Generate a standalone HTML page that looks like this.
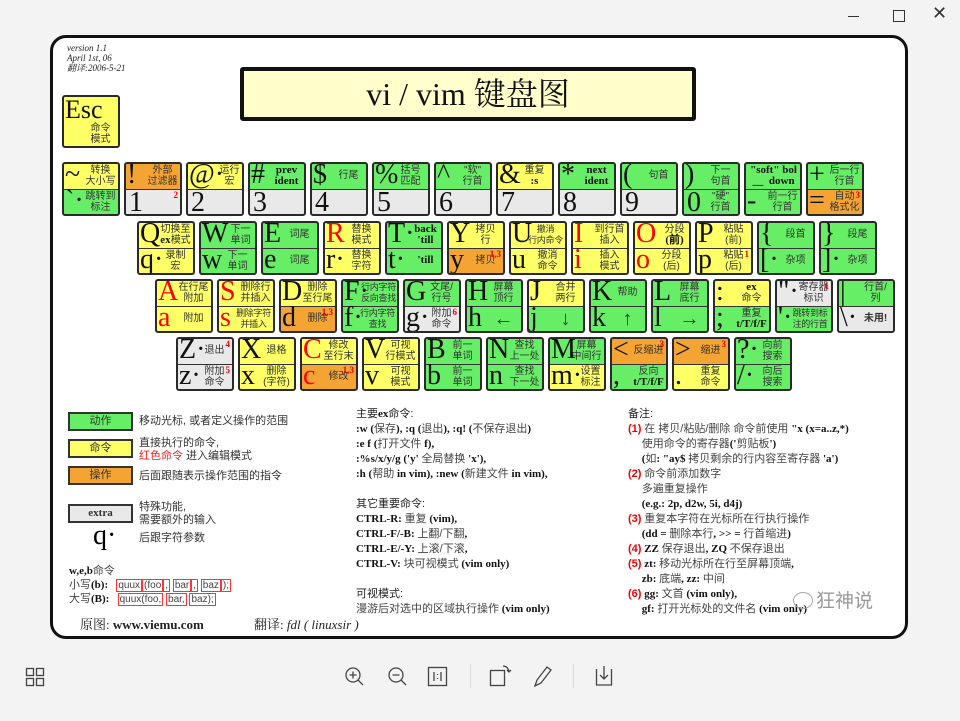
<!DOCTYPE html>
<html><head><meta charset="utf-8"><style>
*{margin:0;padding:0}
body{width:960px;height:721px;background:#f3f3f3;position:relative;overflow:hidden;font-family:"Liberation Serif","Noto Serif CJK SC",serif}
.card{position:absolute;left:50px;top:35px;width:858px;height:604px;background:#fff;border:3px solid #111;border-radius:16px;box-sizing:border-box}
.a{position:absolute}
.k{position:absolute;width:58px;height:54px;border:2px solid #2a2a2a;border-radius:3px;box-sizing:border-box;overflow:hidden;background:#333}
.t,.b{position:absolute;left:0;right:0}
.t{top:0;height:25px}
.b{top:26px;bottom:0}
.G{background:#66ee66}.Y{background:#ffff66}.O{background:#f4a432}.E{background:#e9e9e9}
.L{position:absolute;left:1px;top:-5px;font:28px/32px "Liberation Serif",serif;color:#111}
.r{color:#f00}
.s{position:absolute;left:20px;right:1px;top:1px;text-align:center;font:10px/11px "Liberation Sans","Noto Sans CJK SC",sans-serif;color:#333;white-space:nowrap}
.s9{font-size:9px;letter-spacing:-0.3px}
.s1{top:6px}
.w{font:bold 11px/11px "Liberation Serif",serif;color:#111}
.sup{position:absolute;right:2px;top:0;color:#e00;font:bold 9px/10px "Liberation Serif",serif}
.d{position:absolute;left:3px;top:-3px;font:28px/32px "Liberation Serif",serif;color:#111}
.lg{position:absolute;left:68px;width:65px;height:19px;border:2px solid #333;box-sizing:border-box;text-align:center;font:11px/15px "Liberation Sans","Noto Sans CJK SC",sans-serif;color:#333}
.tx{position:absolute;font:11px/13px "Liberation Sans","Noto Sans CJK SC",sans-serif;color:#333}
.col{position:absolute;font:bold 11px/15px "Liberation Serif","Noto Serif CJK SC",serif;color:#111}
.col span{font-weight:normal;color:#444;font-family:"Liberation Sans","Noto Sans CJK SC",sans-serif}
.col .rd{color:#e00;font-weight:bold}
.mono{font:bold 10px/12px "Liberation Mono",monospace;border:1px solid #f33;padding:0 1px}
</style></head><body>
<div class="a" style="left:848px;top:16px;width:11px;height:1px;background:#333"></div>
<div class="a" style="left:893px;top:10px;width:10px;height:10px;border:1px solid #333"></div>
<div class="a" style="left:932px;top:4px;font:18px/20px 'DejaVu Sans',sans-serif;color:#333">✕</div>

<div class="card"></div>
<div class="a" style="left:67px;top:43px;font:italic 9px/10px 'Liberation Serif','Noto Serif CJK SC',serif;color:#222">version 1.1<br>April 1st, 06<br>翻译:2006-5-21</div>
<div class="a" style="left:240px;top:67px;width:456px;height:54px;border:4px solid #111;border-radius:3px;background:#ffffcc;box-sizing:border-box;text-align:center;font:32px/46px 'Liberation Serif','Noto Serif CJK SC',serif;color:#111">vi / vim 键盘图</div>
<div class="k Y" style="left:62px;top:95px;height:53px;background:#ffff66"><div class="L" style="font-size:26px;top:-3px">Esc</div><div class="s" style="left:20px;top:26px">命令<br>模式</div></div>

<div class="k" style="left:62px;top:162px"><div class="t Y"><div class="L">~</div><div class="s">转换<br>大小写</div></div><div class="b G"><div class="L">`·</div><div class="s">跳转到<br>标注</div></div></div>
<div class="k" style="left:124px;top:162px"><div class="t O"><div class="L">!</div><div class="s">外部<br>过滤器</div></div><div class="b E"><div class="d">1</div><div class="sup">2</div></div></div>
<div class="k" style="left:186px;top:162px"><div class="t Y"><div class="L">@·</div><div class="s" style="left:30px">运行<br>宏</div></div><div class="b E"><div class="d">2</div></div></div>
<div class="k" style="left:248px;top:162px"><div class="t G"><div class="L">#</div><div class="s w">prev<br>ident</div></div><div class="b E"><div class="d">3</div></div></div>
<div class="k" style="left:310px;top:162px"><div class="t G"><div class="L">$</div><div class="s s1">行尾</div></div><div class="b E"><div class="d">4</div></div></div>
<div class="k" style="left:372px;top:162px"><div class="t G"><div class="L">%</div><div class="s">括号<br>匹配</div></div><div class="b E"><div class="d">5</div></div></div>
<div class="k" style="left:434px;top:162px"><div class="t G"><div class="L">^</div><div class="s">"软"<br>行首</div></div><div class="b E"><div class="d">6</div></div></div>
<div class="k" style="left:496px;top:162px"><div class="t Y"><div class="L">&amp;</div><div class="s">重复<br><b class="w">:s</b></div></div><div class="b E"><div class="d">7</div></div></div>
<div class="k" style="left:558px;top:162px"><div class="t G"><div class="L">*</div><div class="s w">next<br>ident</div></div><div class="b E"><div class="d">8</div></div></div>
<div class="k" style="left:620px;top:162px"><div class="t G"><div class="L">(</div><div class="s s1">句首</div></div><div class="b E"><div class="d">9</div></div></div>
<div class="k" style="left:682px;top:162px"><div class="t G"><div class="L">)</div><div class="s">下一<br>句首</div></div><div class="b G"><div class="d">0</div><div class="s">"硬"<br>行首</div></div></div>
<div class="k" style="left:744px;top:162px"><div class="t G"><div class="s w" style="left:2px">"soft" bol<br>__&nbsp; down</div></div><div class="b G"><div class="L">-</div><div class="s">前一行<br>行首</div></div></div>
<div class="k" style="left:806px;top:162px"><div class="t G"><div class="L">+</div><div class="s">后一行<br>行首</div></div><div class="b O"><div class="L">=</div><div class="s">自动<br>格式化</div><div class="sup">3</div></div></div>

<div class="k" style="left:137px;top:221px"><div class="t Y"><div class="L">Q</div><div class="s">切换至<br><b class="w">ex</b>模式</div></div><div class="b Y"><div class="L">q·</div><div class="s">录制<br>宏</div></div></div>
<div class="k" style="left:199px;top:221px"><div class="t G"><div class="L">W</div><div class="s" style="left:26px">下一<br>单词</div></div><div class="b G"><div class="L">w</div><div class="s">下一<br>单词</div></div></div>
<div class="k" style="left:261px;top:221px"><div class="t G"><div class="L">E</div><div class="s s1">词尾</div></div><div class="b G"><div class="L">e</div><div class="s s1">词尾</div></div></div>
<div class="k" style="left:323px;top:221px"><div class="t Y"><div class="L r">R</div><div class="s">替换<br>模式</div></div><div class="b Y"><div class="L">r·</div><div class="s">替换<br>字符</div></div></div>
<div class="k" style="left:385px;top:221px"><div class="t G"><div class="L">T·</div><div class="s w" style="left:24px">back<br>'till</div></div><div class="b G"><div class="L">t·</div><div class="s w s1" style="left:24px">'till</div></div></div>
<div class="k" style="left:447px;top:221px"><div class="t Y"><div class="L">Y</div><div class="s">拷贝<br>行</div></div><div class="b O"><div class="L">y</div><div class="s s1">拷贝</div><div class="sup">1,3</div></div></div>
<div class="k" style="left:509px;top:221px"><div class="t Y"><div class="L">U</div><div class="s s9" style="left:16px">撤消<br>行内命令</div></div><div class="b Y"><div class="L">u</div><div class="s">撤消<br>命令</div></div></div>
<div class="k" style="left:571px;top:221px"><div class="t Y"><div class="L r">I</div><div class="s">到行首<br>插入</div></div><div class="b Y"><div class="L r">i</div><div class="s">插入<br>模式</div></div></div>
<div class="k" style="left:633px;top:221px"><div class="t Y"><div class="L r">O</div><div class="s" style="left:26px">分段<br><b class="w">(前)</b></div></div><div class="b Y"><div class="L r">o</div><div class="s">分段<br>(后)</div></div></div>
<div class="k" style="left:695px;top:221px"><div class="t Y"><div class="L">P</div><div class="s">粘贴<br>(前)</div></div><div class="b Y"><div class="L">p</div><div class="s">粘贴<br>(后)</div><div class="sup">1</div></div></div>
<div class="k" style="left:757px;top:221px"><div class="t G"><div class="L">{</div><div class="s s1">段首</div></div><div class="b G"><div class="L">[·</div><div class="s s1">杂项</div></div></div>
<div class="k" style="left:819px;top:221px"><div class="t G"><div class="L">}</div><div class="s s1">段尾</div></div><div class="b G"><div class="L">]·</div><div class="s s1">杂项</div></div></div>

<div class="k" style="left:155px;top:279px"><div class="t Y"><div class="L r">A</div><div class="s">在行尾<br>附加</div></div><div class="b Y"><div class="L r">a</div><div class="s s1">附加</div></div></div>
<div class="k" style="left:217px;top:279px"><div class="t Y"><div class="L r">S</div><div class="s">删除行<br>并插入</div></div><div class="b Y"><div class="L r">s</div><div class="s s9" style="left:16px">删除字符<br>并插入</div></div></div>
<div class="k" style="left:279px;top:279px"><div class="t Y"><div class="L">D</div><div class="s">删除<br>至行尾</div></div><div class="b O"><div class="L">d</div><div class="s s1">删除</div><div class="sup">1,3</div></div></div>
<div class="k" style="left:341px;top:279px"><div class="t G"><div class="L">F·</div><div class="s s9" style="left:18px">行内字符<br>反向查找</div></div><div class="b G"><div class="L">f·</div><div class="s s9" style="left:16px">行内字符<br>查找</div></div></div>
<div class="k" style="left:403px;top:279px"><div class="t G"><div class="L">G</div><div class="s">文尾/<br>行号</div></div><div class="b E"><div class="L">g·</div><div class="s">附加<br>命令</div><div class="sup">6</div></div></div>
<div class="k" style="left:465px;top:279px"><div class="t G"><div class="L">H</div><div class="s">屏幕<br>顶行</div></div><div class="b G"><div class="L">h</div><div class="s" style="font:bold 20px/22px sans-serif">←</div></div></div>
<div class="k" style="left:527px;top:279px"><div class="t Y"><div class="L">J</div><div class="s">合并<br>两行</div></div><div class="b G"><div class="L">j</div><div class="s" style="font:bold 20px/22px sans-serif">↓</div></div></div>
<div class="k" style="left:589px;top:279px"><div class="t G"><div class="L">K</div><div class="s s1">帮助</div></div><div class="b G"><div class="L">k</div><div class="s" style="font:bold 20px/22px sans-serif">↑</div></div></div>
<div class="k" style="left:651px;top:279px"><div class="t G"><div class="L">L</div><div class="s">屏幕<br>底行</div></div><div class="b G"><div class="L">l</div><div class="s" style="font:bold 20px/22px sans-serif">→</div></div></div>
<div class="k" style="left:713px;top:279px"><div class="t Y"><div class="L">:</div><div class="s"><b class="w">ex</b><br>命令</div></div><div class="b G"><div class="L">;</div><div class="s">重复<br><b class="w">t/T/f/F</b></div></div></div>
<div class="k" style="left:775px;top:279px"><div class="t E"><div class="L">"·</div><div class="s">寄存器<br>标识</div><div class="sup">1</div></div><div class="b G"><div class="L">'·</div><div class="s s9" style="left:13px">跳转到标<br>注的行首</div></div></div>
<div class="k" style="left:837px;top:279px"><div class="t G"><div class="L">|</div><div class="s">行首/<br>列</div></div><div class="b E"><div class="L">\·</div><div class="s s1"><b>未用!</b></div></div></div>

<div class="k" style="left:176px;top:337px"><div class="t E"><div class="L">Z·</div><div class="s s1">退出</div><div class="sup">4</div></div><div class="b E"><div class="L">z·</div><div class="s">附加<br>命令</div><div class="sup">5</div></div></div>
<div class="k" style="left:238px;top:337px"><div class="t Y"><div class="L">X</div><div class="s s1">退格</div></div><div class="b Y"><div class="L">x</div><div class="s">删除<br>(字符)</div></div></div>
<div class="k" style="left:300px;top:337px"><div class="t Y"><div class="L r">C</div><div class="s">修改<br>至行末</div></div><div class="b O"><div class="L r">c</div><div class="s s1">修改</div><div class="sup">1,3</div></div></div>
<div class="k" style="left:362px;top:337px"><div class="t Y"><div class="L">V</div><div class="s">可视<br>行模式</div></div><div class="b Y"><div class="L">v</div><div class="s">可视<br>模式</div></div></div>
<div class="k" style="left:424px;top:337px"><div class="t G"><div class="L">B</div><div class="s">前一<br>单词</div></div><div class="b G"><div class="L">b</div><div class="s">前一<br>单词</div></div></div>
<div class="k" style="left:486px;top:337px"><div class="t G"><div class="L">N</div><div class="s">查找<br>上一处</div></div><div class="b G"><div class="L">n</div><div class="s">查找<br>下一处</div></div></div>
<div class="k" style="left:548px;top:337px"><div class="t G"><div class="L">M</div><div class="s">屏幕<br>中间行</div></div><div class="b Y"><div class="L">m·</div><div class="s" style="left:28px">设置<br>标注</div></div></div>
<div class="k" style="left:610px;top:337px"><div class="t O"><div class="L">&lt;</div><div class="s s1">反缩进</div><div class="sup">3</div></div><div class="b G"><div class="L">,</div><div class="s">反向<br><b class="w">t/T/f/F</b></div></div></div>
<div class="k" style="left:672px;top:337px"><div class="t O"><div class="L">&gt;</div><div class="s s1">缩进</div><div class="sup">3</div></div><div class="b Y"><div class="L">.</div><div class="s">重复<br>命令</div></div></div>
<div class="k" style="left:734px;top:337px"><div class="t G"><div class="L">?·</div><div class="s">向前<br>搜索</div></div><div class="b G"><div class="L">/·</div><div class="s">向后<br>搜索</div></div></div>

<div class="lg G" style="top:412px">动作</div>
<div class="tx" style="left:139px;top:415px">移动光标, 或者定义操作的范围</div>
<div class="lg Y" style="top:439px">命令</div>
<div class="tx" style="left:139px;top:437px">直接执行的命令,<br><span style="color:#e22">红色命令</span> 进入编辑模式</div>
<div class="lg O" style="top:466px">操作</div>
<div class="tx" style="left:139px;top:470px">后面跟随表示操作范围的指令</div>
<div class="lg E" style="top:504px;font:bold 11px/15px 'Liberation Serif',serif">extra</div>
<div class="tx" style="left:139px;top:501px">特殊功能,<br>需要额外的输入</div>
<div class="a" style="left:93px;top:521px;font:28px/30px 'Liberation Serif',serif">q·</div>
<div class="tx" style="left:139px;top:532px">后跟字符参数</div>
<div class="col" style="left:69px;top:564px;line-height:14px">w,e,b<span>命令</span><br><span>小写</span>(b):&nbsp;&nbsp; <span class="mono">quux</span><span class="mono">(foo</span><span class="mono">,</span> <span class="mono">bar</span><span class="mono">,</span> <span class="mono">baz</span><span class="mono">);</span><br><span>大写</span>(B):&nbsp;&nbsp; <span class="mono">quux(foo,</span> <span class="mono">bar,</span> <span class="mono">baz);</span></div>
<div class="a" style="left:80px;top:617px;font:13px/16px 'Liberation Serif','Noto Serif CJK SC',serif;color:#222">原图: <b>www.viemu.com</b></div>
<div class="a" style="left:254px;top:617px;font:13px/16px 'Liberation Serif','Noto Serif CJK SC',serif;color:#222">翻译: <i>fdl ( linuxsir )</i></div>

<div class="col" style="left:356px;top:407px"><span style="color:#222">主要</span>ex<span style="color:#222">命令:</span><br>:w (<span>保存</span>), :q (<span>退出</span>), :q! (<span>不保存退出</span>)<br>:e f (<span>打开文件</span> f),<br>:%s/x/y/g ('y' <span>全局替换</span> 'x'),<br>:h (<span>帮助</span> in vim), :new (<span>新建文件</span> in vim),<br><br><span style="color:#222">其它重要命令:</span><br>CTRL-R: <span>重复</span> (vim),<br>CTRL-F/-B: <span>上翻/下翻</span>,<br>CTRL-E/-Y: <span>上滚/下滚</span>,<br>CTRL-V: <span>块可视模式</span> (vim only)<br><br><span style="color:#222">可视模式:</span><br><span>漫游后对选中的区域执行操作</span> (vim only)</div>

<div class="col" style="left:628px;top:407px"><span style="color:#222">备注:</span><br><span class="rd">(1)</span> <span>在 拷贝/粘贴/删除 命令前使用</span> "x (x=a..z,*)<br>&nbsp;&nbsp;&nbsp;&nbsp;&nbsp;<span>使用命令的寄存器</span>('<span>剪贴板</span>')<br>&nbsp;&nbsp;&nbsp;&nbsp;&nbsp;(<span>如</span>: "ay$ <span>拷贝剩余的行内容至寄存器</span> 'a')<br><span class="rd">(2)</span> <span>命令前添加数字</span><br>&nbsp;&nbsp;&nbsp;&nbsp;&nbsp;<span>多遍重复操作</span><br>&nbsp;&nbsp;&nbsp;&nbsp;&nbsp;(e.g.: 2p, d2w, 5i, d4j)<br><span class="rd">(3)</span> <span>重复本字符在光标所在行执行操作</span><br>&nbsp;&nbsp;&nbsp;&nbsp;&nbsp;(dd = <span>删除本行</span>, &gt;&gt; = <span>行首缩进</span>)<br><span class="rd">(4)</span> ZZ <span>保存退出</span>, ZQ <span>不保存退出</span><br><span class="rd">(5)</span> zt: <span>移动光标所在行至屏幕顶端</span>,<br>&nbsp;&nbsp;&nbsp;&nbsp;&nbsp;zb: <span>底端</span>, zz: <span>中间</span><br><span class="rd">(6)</span> gg: <span>文首</span> (vim only),<br>&nbsp;&nbsp;&nbsp;&nbsp;&nbsp;gf: <span>打开光标处的文件名</span> (vim only)</div>
<div class="a" style="left:793px;top:592px;width:18px;height:15px;border:1.5px solid #aaa;border-radius:50%"></div>
<div class="a" style="left:816px;top:589px;font:19px/22px 'Noto Sans CJK SC',sans-serif;color:#999">狂神说</div>

<svg class="a" style="left:0;top:650px" width="960" height="60" viewBox="0 650 960 60" fill="none" stroke="#444" stroke-width="1.3">
<rect x="26.5" y="668.5" width="7" height="7"/><rect x="36.5" y="668.5" width="7" height="7"/><rect x="26.5" y="678.5" width="7" height="7"/><rect x="36.5" y="678.5" width="7" height="7"/>
<circle cx="353" cy="675" r="7"/><path d="M358 680l5 5M349.5 675h7M353 671.5v7"/>
<circle cx="396" cy="675" r="7"/><path d="M401 680l5 5M392.5 675h7"/>
<rect x="428.5" y="667.5" width="18" height="18"/><path d="M434 672v9M441 672v9M437.5 674v1M437.5 678v1"/>
<path d="M470.5 664v24M573.5 664v24" stroke="#ddd"/>
<rect x="490.5" y="670.5" width="14" height="15"/><path d="M503 666q5 0 6 6M507 670l2 2 2-2"/>
<path d="M535 686l2-6 10-13 4 3-10 13z"/>
<path d="M596.5 669v16h15v-16M604 666v13M600 675l4 4 4-4"/>
</svg>
</body></html>
